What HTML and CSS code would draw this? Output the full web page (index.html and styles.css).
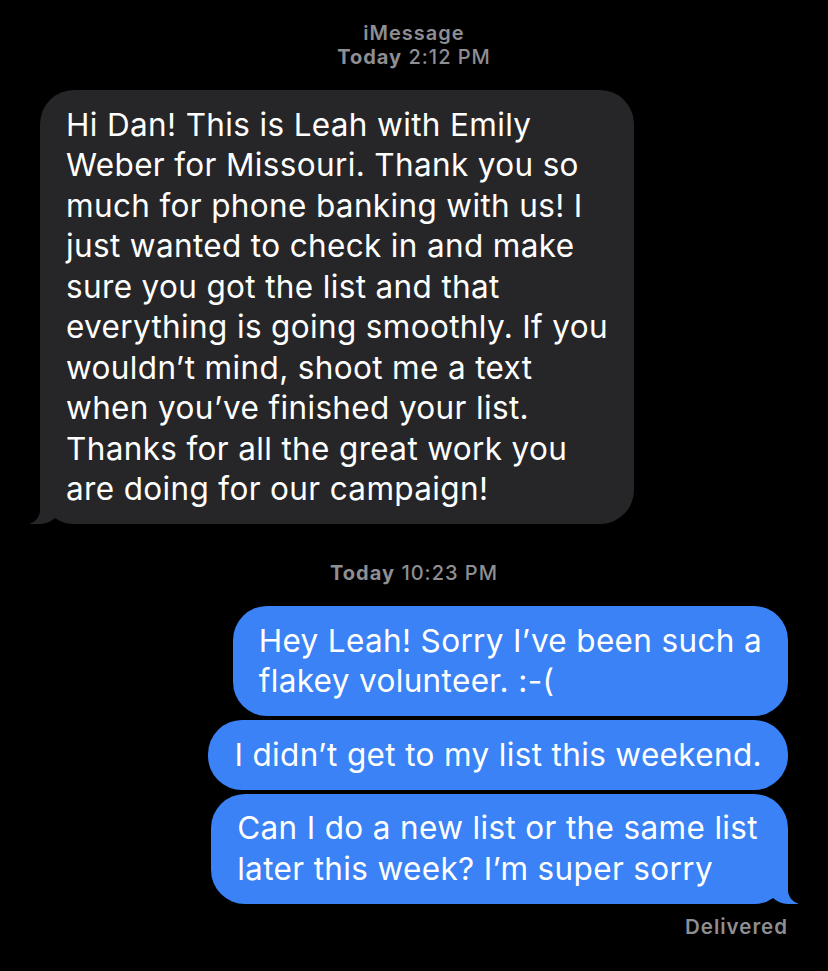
FILE: index.html
```html
<!DOCTYPE html>
<html>
<head>
<meta charset="utf-8">
<link rel="stylesheet" href="styles.css">
</head>
<body>
<div class="thread">
  <div class="stamp">
    <div class="service">iMessage</div>
    <div><b>Today</b> 2:12 PM</div>
  </div>

  <div class="row them">
    <div class="bubble gray tail-left">Hi Dan! This is Leah with Emily<br>Weber for Missouri. Thank you so<br>much for phone banking with us! I<br>just wanted to check in and make<br>sure you got the list and that<br>everything is going smoothly. If you<br>wouldn’t mind, shoot me a text<br>when you’ve finished your list.<br>Thanks for all the great work you<br>are doing for our campaign!</div>
  </div>

  <div class="stamp stamp-mid">
    <div><b>Today</b> 10:23 PM</div>
  </div>

  <div class="group me">
    <div class="bubble blue">Hey Leah! Sorry I’ve been such a<br>flakey volunteer. :-(</div>
    <div class="bubble blue">I didn’t get to my list this weekend.</div>
    <div class="bubble blue tail-right wide">Can I do a new list or the same list<br>later this week? I’m super sorry</div>
  </div>

  <div class="delivered">Delivered</div>
</div>
</body>
</html>
```
FILE: styles.css
```css
html, body {
  margin: 0;
  padding: 0;
  background: #000;
}
body {
  font-family: Inter, "Liberation Sans", sans-serif;
  color: #fff;
}
.thread {
  display: flex;
  flex-direction: column;
  padding: 21px 40px 0 40px;
}
.stamp {
  text-align: center;
  color: #8e8e93;
  font-size: 20px;
  line-height: 24px;
  font-weight: 500;
  letter-spacing: 1px;
}
.stamp b {
  font-weight: 700;
}
.service {
  font-weight: 600;
}
.stamp-mid {
  margin-top: 37px;
}
.row.them {
  display: flex;
  justify-content: flex-start;
  margin-top: 21px;
}
.group.me {
  display: flex;
  flex-direction: column;
  align-items: flex-end;
  gap: 4px;
  margin-top: 21px;
}
.bubble {
  position: relative;
  font-size: 31.5px;
  line-height: 40.5px;
  letter-spacing: 0.35px;
  padding: 14.5px 26px;
  border-radius: 34px;
  white-space: nowrap;
}
.bubble.wide {
  padding-right: 30px;
}
.gray {
  background: #262628;
}
.blue {
  background: #3a82f5;
}
.tail-left::before {
  content: "";
  position: absolute;
  left: -10px;
  bottom: 0;
  width: 32px;
  height: 34px;
  background: #262628;
  border-bottom-right-radius: 22px;
}
.tail-left::after {
  content: "";
  position: absolute;
  left: -16px;
  bottom: 0;
  width: 16px;
  height: 34px;
  background: #000;
  border-bottom-right-radius: 14px;
}
.tail-right::before {
  content: "";
  position: absolute;
  right: -10px;
  bottom: 0;
  width: 32px;
  height: 34px;
  background: #3a82f5;
  border-bottom-left-radius: 22px;
}
.tail-right::after {
  content: "";
  position: absolute;
  right: -16px;
  bottom: 0;
  width: 16px;
  height: 34px;
  background: #000;
  border-bottom-left-radius: 14px;
}
.delivered {
  align-self: flex-end;
  margin-top: 11px;
  color: #8e8e93;
  font-size: 20.5px;
  line-height: 24px;
  font-weight: 600;
  letter-spacing: 1px;
}
```
